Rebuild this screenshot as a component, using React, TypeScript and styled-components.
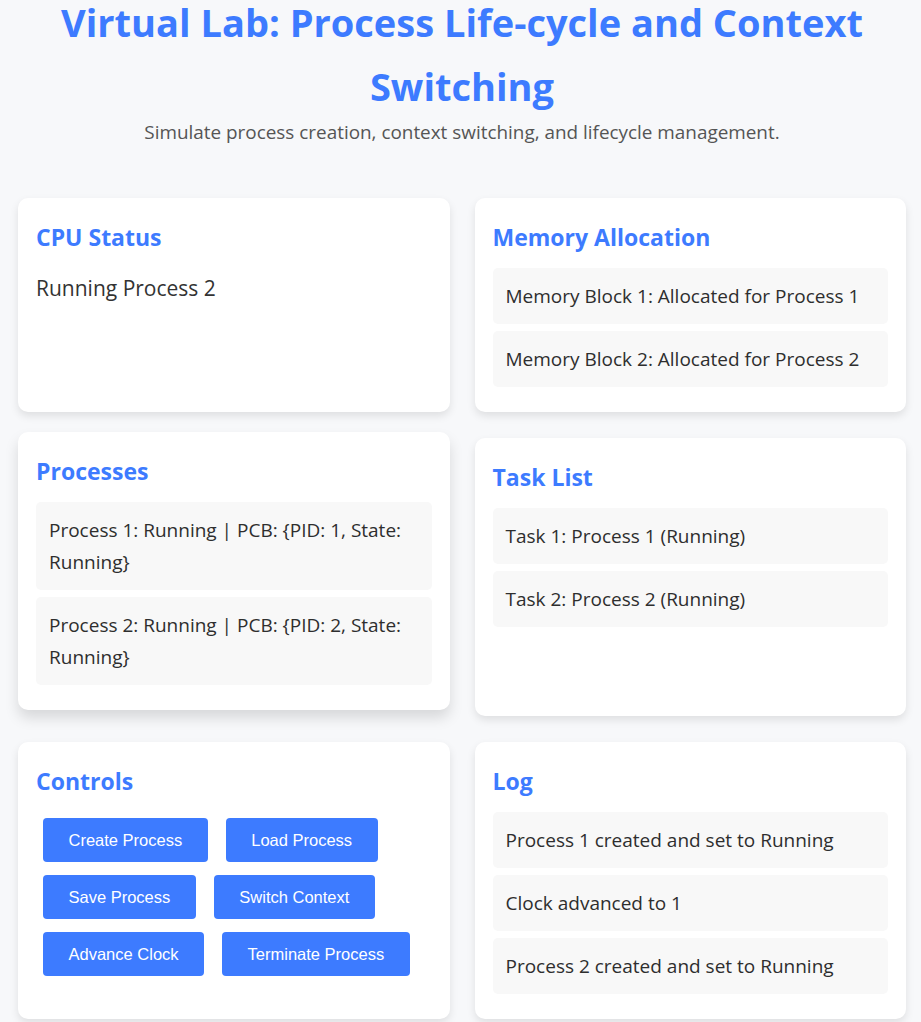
import React from "react";
import styled, { createGlobalStyle } from "styled-components";

const GlobalStyle = createGlobalStyle`
  body {
    margin: 0;
    background: #f7f8fa;
    font-family: "Open Sans", "Noto Sans", sans-serif;
    color: #333;
  }
`;

const Page = styled.div`
  padding: 0 15px 40px 18px;
`;

const Header = styled.header`
  text-align: center;
  margin-top: -10px;
  margin-bottom: 51px;
`;

const Title = styled.h1`
  margin: 0;
  font-size: 38px;
  line-height: 64px;
  font-weight: 700;
  color: #3d7bff;
`;

const Subtitle = styled.p`
  margin: 0;
  font-size: 18.9px;
  line-height: 29px;
  color: #555;
`;

const Grid = styled.main`
  display: grid;
  grid-template-columns: 1fr 1fr;
  column-gap: 25px;
  row-gap: 26px;
`;

const Card = styled.section<{ $lifted?: boolean }>`
  background: #fff;
  border-radius: 10px;
  padding: 18px;
  box-shadow: ${(p) =>
    p.$lifted ? "0 8px 14px rgba(0, 0, 0, 0.13)" : "0 4px 8px rgba(0, 0, 0, 0.1)"};
  transform: ${(p) => (p.$lifted ? "translateY(-6px)" : "none")};
`;

const CardTitle = styled.h2`
  margin: 2px 0 12px;
  font-size: 23px;
  line-height: 38px;
  font-weight: 700;
  color: #3d7bff;
`;

const Status = styled.p`
  margin: 17px 0 0;
  font-size: 21px;
  line-height: 30px;
`;

const List = styled.ul`
  list-style: none;
  margin: 0 0 7px;
  padding: 0;
  display: flex;
  flex-direction: column;
  gap: 7px;
`;

const Item = styled.li`
  background: #f8f8f8;
  border-radius: 5px;
  padding: 12px 13px;
  font-size: 19px;
  line-height: 32px;
  color: #2e2e2e;
`;

const ButtonWrap = styled.div`
  display: flex;
  flex-wrap: wrap;
  column-gap: 18px;
  row-gap: 13px;
  padding: 6px 7px 0;
`;

const Button = styled.button`
  background: #3d7bff;
  color: #fff;
  border: none;
  border-radius: 4px;
  padding: 12px 25.5px;
  font-family: "Liberation Sans", Arial, sans-serif;
  font-size: 16.5px;
  line-height: 20px;
  cursor: pointer;
`;

const memory = [
  "Memory Block 1: Allocated for Process 1",
  "Memory Block 2: Allocated for Process 2",
];

const processes = [
  "Process 1: Running | PCB: {PID: 1, State: Running}",
  "Process 2: Running | PCB: {PID: 2, State: Running}",
];

const tasks = ["Task 1: Process 1 (Running)", "Task 2: Process 2 (Running)"];

const controls = [
  "Create Process",
  "Load Process",
  "Save Process",
  "Switch Context",
  "Advance Clock",
  "Terminate Process",
];

const log = [
  "Process 1 created and set to Running",
  "Clock advanced to 1",
  "Process 2 created and set to Running",
];

export default function App() {
  return (
    <Page>
      <GlobalStyle />
      <Header>
        <Title>Virtual Lab: Process Life-cycle and Context Switching</Title>
        <Subtitle>
          Simulate process creation, context switching, and lifecycle management.
        </Subtitle>
      </Header>
      <Grid>
        <Card>
          <CardTitle>CPU Status</CardTitle>
          <Status>Running Process 2</Status>
        </Card>
        <Card>
          <CardTitle>Memory Allocation</CardTitle>
          <List>
            {memory.map((m) => (
              <Item key={m}>{m}</Item>
            ))}
          </List>
        </Card>
        <Card $lifted>
          <CardTitle>Processes</CardTitle>
          <List>
            {processes.map((p) => (
              <Item key={p}>{p}</Item>
            ))}
          </List>
        </Card>
        <Card>
          <CardTitle>Task List</CardTitle>
          <List>
            {tasks.map((t) => (
              <Item key={t}>{t}</Item>
            ))}
          </List>
        </Card>
        <Card>
          <CardTitle>Controls</CardTitle>
          <ButtonWrap>
            {controls.map((c) => (
              <Button key={c}>{c}</Button>
            ))}
          </ButtonWrap>
        </Card>
        <Card>
          <CardTitle>Log</CardTitle>
          <List>
            {log.map((l) => (
              <Item key={l}>{l}</Item>
            ))}
          </List>
        </Card>
      </Grid>
    </Page>
  );
}
